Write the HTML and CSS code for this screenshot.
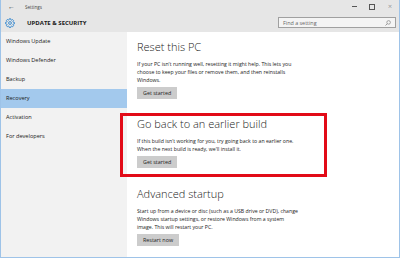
FILE: index.html
```html
<!DOCTYPE html>
<html lang="en">
<head>
  <meta charset="UTF-8">
  <title>Settings</title>
  <link rel="stylesheet" href="styles.css">
</head>
<body>

  <div class="window">

    <!-- Barra de título -->
    <div class="titlebar">
      <span class="back">&#8592;</span>
      <span class="app-name">Settings</span>
      <div class="controls">
        <span class="ctl ctl-min"></span>
        <span class="ctl ctl-max"></span>
        <span class="ctl ctl-close">&#215;</span>
      </div>
    </div>

    <!-- Cabecera: icono + sección + buscador -->
    <div class="header">
      <svg class="gear" viewBox="0 0 20 20" width="10" height="10">
        <path d="M8.6 1.5h2.8l.4 2.2 1.5.7 1.9-1.3 2 2-1.3 1.9.7 1.5 2.2.4v2.8l-2.2.4-.7 1.5 1.3 1.9-2 2-1.9-1.3-1.5.7-.4 2.2H8.6l-.4-2.2-1.5-.7-1.9 1.3-2-2 1.3-1.9-.7-1.5-2.2-.4V8.6l2.2-.4.7-1.5-1.3-1.9 2-2 1.9 1.3 1.5-.7z" fill="none" stroke="#1979ca" stroke-width="1.6" stroke-linejoin="round"/>
        <circle cx="10" cy="10" r="2.8" fill="none" stroke="#1979ca" stroke-width="1.6"/>
      </svg>
      <span class="section-title">UPDATE &amp; SECURITY</span>
      <div class="search">
        <span class="search-text">Find a setting</span>
        <svg class="search-icon" viewBox="0 0 10 10" width="6" height="6">
          <circle cx="6" cy="4" r="3" fill="none" stroke="#777" stroke-width="1"/>
          <line x1="3.8" y1="6.2" x2="0.8" y2="9.2" stroke="#777" stroke-width="1.2"/>
        </svg>
      </div>
    </div>

    <div class="body">
      <!-- Menú lateral -->
      <ul class="sidebar">
        <li>Windows Update</li>
        <li>Windows Defender</li>
        <li>Backup</li>
        <li class="active">Recovery</li>
        <li>Activation</li>
        <li>For developers</li>
      </ul>

      <!-- Contenido principal -->
      <div class="content">
        <div class="block">
          <h2>Reset this PC</h2>
          <p>If your PC isn't running well, resetting it might help. This lets you<br>
          choose to keep your files or remove them, and then reinstalls<br>
          Windows.</p>
          <button class="btn">Get started</button>
        </div>

        <div class="block highlight">
          <h2>Go back to an earlier build</h2>
          <p>If this build isn't working for you, try going back to an earlier one.<br>
          When the next build is ready, we'll install it.</p>
          <button class="btn">Get started</button>
        </div>

        <div class="block">
          <h2>Advanced startup</h2>
          <p>Start up from a device or disc (such as a USB drive or DVD), change<br>
          Windows startup settings, or restore Windows from a system<br>
          image. This will restart your PC.</p>
          <button class="btn">Restart now</button>
        </div>
      </div>
    </div>

  </div>

</body>
</html>
```

FILE: styles.css
```css
/* ====== RESET ====== */
html, body {
  margin: 0;
  padding: 0;
}

body {
  font-family: 'Open Sans', 'Liberation Sans', sans-serif;
  color: #1a1a1a;
  background: #fff;
}

/* ====== VENTANA ====== */
.window {
  box-sizing: border-box;
  width: 400px;
  height: 258px;
  border: 1px solid #9ec3e8;
  border-top: none;
  display: flex;
  flex-direction: column;
  overflow: hidden;
}

/* ====== BARRA DE TÍTULO ====== */
.titlebar {
  height: 13px;
  background: #e6e6e6;
  display: flex;
  align-items: center;
  padding-left: 7px;
}
.back {
  font-size: 7px;
  color: #444;
  width: 17px;
}
.app-name {
  font-size: 4.6px;
  color: #444;
}
.controls {
  margin-left: auto;
  display: flex;
  align-items: center;
}
.ctl {
  width: 18px;
  display: flex;
  justify-content: center;
  align-items: center;
  height: 12px;
}
.ctl-min::before {
  content: "";
  width: 5px;
  height: 1px;
  background: #555;
}
.ctl-max::before {
  content: "";
  width: 4px;
  height: 4px;
  border: 1px solid #555;
}
.ctl-close {
  font-size: 7px;
  font-weight: 300;
  color: #555;
  line-height: 1;
}

/* ====== CABECERA ====== */
.header {
  height: 19px;
  background: #e6e6e6;
  display: flex;
  align-items: center;
  padding-left: 4px;
}
.gear {
  margin-right: 12px;
}
.section-title {
  font-size: 6px;
  font-weight: 700;
  color: #1a1a1a;
}
.search {
  margin-left: auto;
  margin-right: 3px;
  box-sizing: border-box;
  width: 118px;
  height: 11px;
  background: #f4f4f4;
  border: 1px solid #a0a0a0;
  display: flex;
  align-items: center;
  padding: 0 4px;
}
.search-text {
  font-size: 5.4px;
  color: #666;
}
.search-icon {
  margin-left: auto;
}

/* ====== CUERPO ====== */
.body {
  flex: 1;
  display: flex;
}

/* Menú lateral */
.sidebar {
  list-style: none;
  margin: 0;
  padding: 0;
  width: 126px;
  background: #f2f2f2;
}
.sidebar li {
  height: 19px;
  line-height: 19px;
  padding-left: 5px;
  font-size: 5.6px;
  color: #1a1a1a;
}
.sidebar li.active {
  background: #a3c9ed;
}

/* Contenido */
.content {
  flex: 1;
  padding: 7px 0 0 10px;
}
.block h2 {
  margin: 0 0 5px;
  font-size: 11px;
  font-weight: 300;
  line-height: 16px;
  color: #222;
}
.block p {
  margin: 0;
  font-size: 5.2px;
  line-height: 8px;
}
.btn {
  display: block;
  font-family: inherit;
  font-size: 5.4px;
  color: #222;
  background: #cccccc;
  border: none;
  height: 12px;
  padding: 0 6px;
  margin: 3px 0 0;
}

/* Recuadro rojo de resaltado */
.highlight {
  box-sizing: border-box;
  width: 207px;
  margin: 14px 0 9px -17px;
  border: 3px solid #e20a17;
  padding: 0 0 6px 14px;
}
```
